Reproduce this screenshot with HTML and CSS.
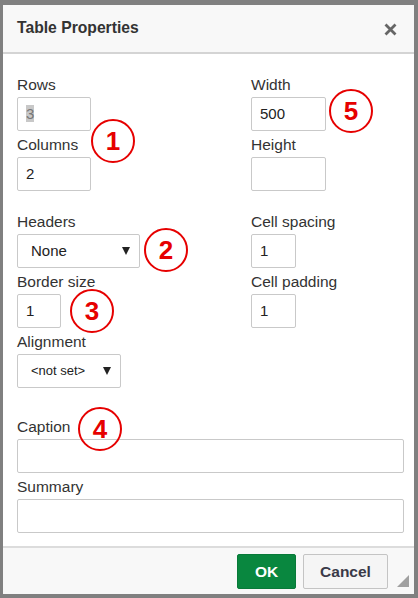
FILE: index.html
```html
<!DOCTYPE html>
<html>
<head>
<meta charset="utf-8">
<link rel="stylesheet" href="styles.css">
</head>
<body>
<div class="dialog">
  <div class="header">
    <span class="title">Table Properties</span>
    <svg class="close" width="13" height="13" viewBox="0 0 13 13"><path d="M1.5 1.5 L11.5 11.5 M11.5 1.5 L1.5 11.5" stroke="#666" stroke-width="2.8" stroke-linecap="butt"/></svg>
  </div>
  <div class="content">
    <div class="group">
      <div class="col">
        <div class="field"><label>Rows</label><div class="box w74"><span class="sel">3</span></div></div>
        <div class="field"><label>Columns</label><div class="box w74">2</div></div>
      </div>
      <div class="col">
        <div class="field"><label>Width</label><div class="box w75">500</div></div>
        <div class="field"><label>Height</label><div class="box w75"></div></div>
      </div>
    </div>
    <div class="group g2">
      <div class="col">
        <div class="field"><label>Headers</label><div class="box select w123"><span class="opt">None</span><span class="arrow"></span></div></div>
        <div class="field"><label>Border size</label><div class="box w44">1</div></div>
        <div class="field"><label>Alignment</label><div class="box select w104"><span class="opt small">&lt;not set&gt;</span><span class="arrow"></span></div></div>
      </div>
      <div class="col">
        <div class="field"><label>Cell spacing</label><div class="box w45">1</div></div>
        <div class="field"><label>Cell padding</label><div class="box w45">1</div></div>
      </div>
    </div>
    <div class="wide">
      <div class="field"><label>Caption</label><div class="box full"></div></div>
      <div class="field"><label>Summary</label><div class="box full"></div></div>
    </div>
  </div>
  <div class="footer">
    <div class="btn ok">OK</div>
    <div class="btn cancel">Cancel</div>
    <span class="grip"></span>
  </div>
  <span class="mark m1">1</span>
  <span class="mark m2">2</span>
  <span class="mark m3">3</span>
  <span class="mark m4">4</span>
  <span class="mark m5">5</span>
</div>
</body>
</html>
```
FILE: styles.css
```css
html, body {
  margin: 0;
  padding: 0;
  background: #808080;
  width: 418px;
  height: 598px;
  overflow: hidden;
}
body {
  font-family: "Liberation Sans", Arial, sans-serif;
  color: #333;
}
.dialog {
  position: relative;
  margin: 5px 4px 4px 3px;
  width: 411px;
  height: 589px;
  background: #fff;
  display: flex;
  flex-direction: column;
}
.header {
  height: 47px;
  background: #f8f8f8;
  border-bottom: 2px solid #d4d4d4;
  display: flex;
  align-items: center;
  justify-content: space-between;
  padding: 0 17px 0 14px;
  flex-shrink: 0;
}
.title {
  font-weight: bold;
  font-size: 15.7px;
  color: #333;
  margin-top: -2px;
}
.close {
  display: block;
  margin-top: 1px;
}
.content {
  flex: 1;
  padding: 21px 10px 0 14px;
}
.group {
  display: grid;
  grid-template-columns: 234px 1fr;
}
.g2 {
  margin-top: 21px;
}
.col {
  display: flex;
  flex-direction: column;
  gap: 4px;
}
.field {
  display: flex;
  flex-direction: column;
  gap: 2px;
}
label {
  font-size: 15.5px;
  line-height: 20px;
  color: #333;
}
.box {
  box-sizing: border-box;
  height: 34px;
  border: 1px solid #c9c9c9;
  border-radius: 2px;
  font-size: 15px;
  line-height: 32px;
  padding-left: 8px;
  color: #222;
  background: #fff;
}
.w74 { width: 74px; }
.w75 { width: 75px; }
.w44 { width: 44px; }
.w45 { width: 45px; }
.w123 { width: 123px; }
.w104 { width: 104px; }
.full { width: 387px; }
.sel {
  background: #c8c8c8;
  color: #777;
}
.select {
  display: flex;
  align-items: center;
  justify-content: space-between;
  padding: 0 9px 0 13px;
}
.opt { font-size: 15px; }
.opt.small { font-size: 13px; }
.arrow {
  width: 0;
  height: 0;
  border-left: 4px solid transparent;
  border-right: 4px solid transparent;
  border-top: 8px solid #222;
}
.wide {
  margin-top: 29px;
  display: flex;
  flex-direction: column;
  gap: 4px;
}
.footer {
  background: #f8f8f8;
  border-top: 2px solid #dcdcdc;
  display: flex;
  justify-content: flex-end;
  align-items: flex-start;
  gap: 7px;
  padding: 6px 26px 0 0;
  box-sizing: border-box;
  height: 48px;
  position: relative;
  flex-shrink: 0;
}
.btn {
  box-sizing: border-box;
  height: 35px;
  line-height: 33px;
  font-size: 15.5px;
  font-weight: bold;
  text-align: center;
  border-radius: 2px;
}
.ok {
  width: 59px;
  background: #09873f;
  border: 1px solid #087a39;
  color: #fff;
}
.cancel {
  width: 85px;
  background: #f5f5f5;
  border: 1px solid #c4c4c4;
  color: #3a3a48;
}
.grip {
  position: absolute;
  right: 5px;
  bottom: 7px;
  width: 0;
  height: 0;
  border-left: 12px solid transparent;
  border-bottom: 12px solid #a0a0a0;
}
.mark {
  position: absolute;
  box-sizing: border-box;
  width: 44px;
  height: 44px;
  border: 2px solid #e60000;
  border-radius: 50%;
  color: #e60000;
  font-weight: bold;
  font-size: 26px;
  line-height: 40px;
  text-align: center;
  font-family: "Liberation Sans", Arial, sans-serif;
}
.m1 { left: 88px; top: 114px; }
.m2 { left: 141px; top: 223px; }
.m3 { left: 67px; top: 284px; }
.m4 { left: 75px; top: 402px; }
.m5 { left: 326px; top: 84px; }
```
